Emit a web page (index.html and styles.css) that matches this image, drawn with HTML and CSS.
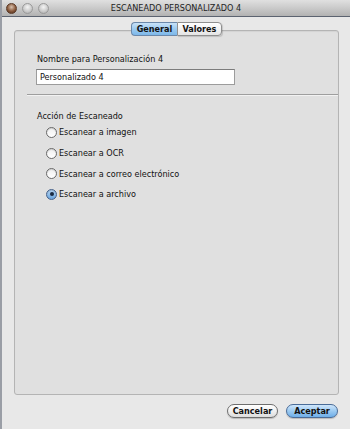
FILE: index.html
```html
<!DOCTYPE html>
<html lang="es">
<head>
<meta charset="utf-8">
<title>Escaneado personalizado 4</title>
<link rel="stylesheet" href="styles.css">
</head>
<body>
<div class="window">
  <div class="titlebar">
    <div class="lights">
      <span class="light close"></span>
      <span class="light"></span>
      <span class="light"></span>
    </div>
    <div class="title">ESCANEADO PERSONALIZADO 4</div>
  </div>
  <div class="content">
    <div class="panel">
      <div class="tabs">
        <span class="tab active">General</span>
        <span class="tab last">Valores</span>
      </div>
      <div class="section">
        <div class="label">Nombre para Personalización 4</div>
        <div class="field">Personalizado 4</div>
      </div>
      <div class="sep"></div>
      <div class="section actions">
        <div class="label">Acción de Escaneado</div>
        <ul class="radios">
          <li><span class="radio"></span>Escanear a imagen</li>
          <li><span class="radio"></span>Escanear a OCR</li>
          <li><span class="radio"></span>Escanear a correo electrónico</li>
          <li><span class="radio on"></span>Escanear a archivo</li>
        </ul>
      </div>
    </div>
    <div class="buttons">
      <span class="btn cancel">Cancelar</span>
      <span class="btn primary">Aceptar</span>
    </div>
  </div>
</div>
</body>
</html>
```
FILE: styles.css
```css
html, body {
  margin: 0;
  padding: 0;
}
body {
  width: 350px;
  height: 429px;
  overflow: hidden;
  background: #e8e8e8;
  font-family: "DejaVu Sans Condensed", "Liberation Sans", sans-serif;
  font-size: 9px;
  color: #111;
}
.window {
  height: 429px;
  border-left: 2px solid #9a9ea6;
  box-sizing: border-box;
  background: #e8e8e8;
}
.titlebar {
  height: 16px;
  border-bottom: 1px solid #5c6370;
  background: linear-gradient(#e0e0e0, #cacaca 50%, #b2b2b2);
  display: flex;
  align-items: center;
  position: relative;
}
.lights {
  display: flex;
  gap: 5px;
  padding-left: 4px;
}
.light {
  width: 9px;
  height: 9px;
  border-radius: 50%;
  background: radial-gradient(circle at 50% 35%, #f4f4f4, #c8c8c8 60%, #a4a4a4);
  border: 0.5px solid #9a9a9a;
}
.light.close {
  background: radial-gradient(circle at 50% 35%, #d8c2b0, #8a5a3c 55%, #4a2a18);
  border-color: #5a3a28;
}
.title {
  position: absolute;
  left: 0;
  right: 0;
  text-align: center;
  font-size: 9px;
  color: #222;
}
.content {
  padding: 13px 11px 0 12px;
}
.panel {
  height: 363px;
  background: #e0e0e0;
  border: 1px solid #b4b4b4;
  border-radius: 3px;
  box-shadow: inset 0 1px 1px rgba(0,0,0,0.06);
}
.tabs {
  display: flex;
  justify-content: center;
  margin-top: -9px;
}
.tab {
  box-sizing: border-box;
  flex: 0 0 auto;
  height: 14px;
  line-height: 12px;
  font-weight: bold;
  font-size: 9px;
  text-align: center;
  background: linear-gradient(#ffffff, #f2f2f2 50%, #e4e4e4);
  border: 1px solid #8f8f8f;
}
.tab.active {
  width: 46px;
  border-radius: 4px 0 0 4px;
  border-right: none;
  background: linear-gradient(#c9e2f8, #9ccaf0 50%, #7db8ea);
  border-color: #6b88aa;
}
.tab.last {
  width: 45px;
  border-radius: 0 4px 4px 0;
  box-shadow: 1px 1px 1px rgba(0,0,0,0.15);
}
.section {
  padding-left: 22px;
}
.label {
  margin-top: 18px;
  line-height: 10px;
}
.field {
  margin-top: 5px;
  width: 194px;
  height: 14px;
  line-height: 14px;
  padding-left: 3px;
  background: #fff;
  border: 1px solid #9c9c9c;
  border-top-color: #7c7c7c;
  margin-left: -1px;
}
.sep {
  margin: 9px 0 0 12px;
  height: 1px;
  background: #9e9e9e;
  border-bottom: 1px solid #f2f2f2;
}
.actions .label {
  margin-top: 15px;
}
.radios {
  list-style: none;
  margin: 1px 0 0 9px;
  padding: 0;
}
.radios li {
  display: flex;
  align-items: center;
  height: 20.7px;
}
.radio {
  width: 9px;
  height: 9px;
  border-radius: 50%;
  border: 1px solid #6a6a6a;
  background: linear-gradient(#f0f0f0, #ffffff);
  margin-right: 2px;
  box-shadow: inset 0 1px 1px rgba(0,0,0,0.15);
  display: flex;
  align-items: center;
  justify-content: center;
}
.radio.on {
  background: linear-gradient(#b8d8f6, #6aa4dc);
  border-color: #44608a;
}
.radio.on::after {
  content: "";
  width: 4px;
  height: 4px;
  border-radius: 50%;
  background: #1a2a40;
}
.buttons {
  display: flex;
  justify-content: flex-end;
  gap: 8px;
  margin-top: 9px;
  padding-right: 1px;
}
.btn {
  box-sizing: border-box;
  height: 14px;
  line-height: 12px;
  text-align: center;
  border-radius: 7px;
  border: 1px solid #6e6e6e;
  background: linear-gradient(#ffffff, #f0f0f0 50%, #dcdcdc);
  font-weight: bold;
  font-size: 9px;
  box-shadow: 0 1px 1px rgba(0,0,0,0.2);
}
.btn.cancel {
  width: 51px;
}
.btn.primary {
  width: 52px;
  background: linear-gradient(#cfe6fb, #9ccaf1 50%, #6eaee8);
  border-color: #4a6c98;
}
```
